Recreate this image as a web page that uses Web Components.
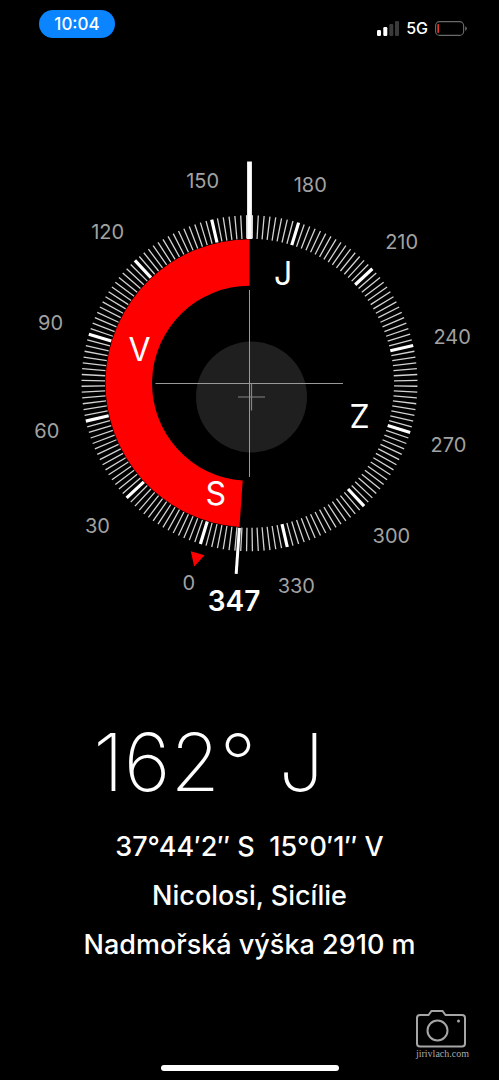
<!DOCTYPE html>
<html lang="cs">
<head>
<meta charset="utf-8">
<meta name="viewport" content="width=device-width, initial-scale=1">
<title>Kompas</title>
<style>
  html { background: #000; }
  body { margin: 0; background: #000; color: #fff; font-family: Inter, "Liberation Sans", sans-serif; }
</style>
</head>
<body>
<compass-app></compass-app>

<template id="status-bar">
  <style>
    :host { display: flex; justify-content: space-between; align-items: flex-start; padding: 10px 32px 0 39px; font-size: 17px; line-height: 28px; font-weight: 500; }
    .time { background: #0a84ff; border-radius: 14px; padding: 0 15px; min-width: 46px; text-align: center; }
    .right { display: flex; align-items: center; gap: 7px; padding-top: 4px; font-size: 16px; }
    svg { display: block; }
  </style>
  <div class="time"><slot name="time"></slot></div>
  <div class="right">
    <svg width="23" height="15" viewBox="0 0 23 15" aria-hidden="true">
      <g fill="#fff"><rect x="1" y="9" width="4" height="6" rx="1.2"/><rect x="7.3" y="6" width="4" height="9" rx="1.2"/></g>
      <g fill="#3a3a3a"><rect x="13.3" y="3" width="4" height="12" rx="1.2"/><rect x="19" y="0" width="4" height="15" rx="1.2"/></g>
    </svg>
    <slot name="network"></slot>
    <svg width="32" height="15" viewBox="0 0 32 15" aria-hidden="true">
      <rect x=".6" y=".6" width="28" height="13.8" rx="4" fill="none" stroke="#6a6a6a" stroke-width="1.1"/>
      <path d="M30.2 5.2v4.6c1-.4 1.6-1.3 1.6-2.3s-.6-1.9-1.6-2.3z" fill="#6a6a6a"/>
      <rect x="2.4" y="3" width="1.5" height="9" rx=".7" fill="#ff3b30"/>
    </svg>
  </div>
</template>

<template id="compass-dial">
  <style>
    :host { display: block; }
    svg { display: block; width: 100%; height: auto; font-family: inherit; }
    text { text-anchor: middle; fill: #fff; }
    .deg { font-size: 20px; fill: #a2a2a2; }
    .card { font-size: 32px; }
    .mark { font-size: 28px; font-weight: 600; }
  </style>
  <svg viewBox="0 150 499 470" role="img" aria-label="Kompas">
    <circle cx="251.5" cy="397" r="55.5" fill="#1f1f1f"/>
    <path class="arc" fill="#f00"/>
    <g class="minor" stroke="#d2d2d2" stroke-width="1.3"></g>
    <g class="major" stroke="#fff" stroke-width="3.2"></g>
    <path d="M249.5 290V477M155.5 383.5H343" stroke="#999" fill="none"/>
    <path d="M238 397H265M251.5 383.5V410.5" stroke="#858585" stroke-width="1.2" fill="none"/>
    <path d="M249.5 161.5V239" stroke="#fff" stroke-width="4.8"/>
    <path d="M246.8 215.5V238M252.2 215.5V238" stroke="#ddd" stroke-width="1"/>
    <path class="bearing" stroke="#fff" stroke-width="3"/>
    <path d="M190.8 551.2L204.5 555.3L194.2 566.5Z" fill="#f00"/>
    <g class="labels"></g>
  </svg>
</template>

<template id="compass-readout">
  <style>
    :host { display: flex; flex-direction: column; align-items: center; text-align: center; font-size: 27px; line-height: 49px; font-weight: 500; white-space: pre; }
    .heading { font-size: 80px; line-height: 100px; font-weight: 200; padding-right: 82px; margin-bottom: 10px; }
  </style>
  <div class="heading"><slot name="heading"></slot></div>
  <slot></slot>
</template>

<template id="photo-credit">
  <style>
    :host { display: block; }
    a { display: flex; flex-direction: column; align-items: flex-start; color: #aaa; text-decoration: none; font: 10px/12px "Liberation Serif", serif; }
    svg { display: block; }
  </style>
  <a href="#"><svg width="50" height="38" viewBox="0 0 50 38" fill="none" stroke="#a6a6a6" stroke-width="2" aria-hidden="true">
    <path d="M4 5H12.5L15.5 1H26.5L29.5 5H46Q49 5 49 8V33.5Q49 36.5 46 36.5H4Q1 36.5 1 33.5V8Q1 5 4 5Z"/>
    <circle cx="21.5" cy="20.5" r="10"/><circle cx="42.5" cy="11" r="1.5" fill="#a6a6a6" stroke="none"/>
  </svg><slot></slot></a>
</template>

<template id="compass-app">
  <style>
    :host { display: flex; flex-direction: column; min-height: 100vh; }
    compass-dial { margin-top: 108px; }
    compass-readout { margin-top: 92px; }
    footer { display: flex; flex-direction: column; gap: 5px; margin-top: auto; padding-bottom: 9px; }
    photo-credit { align-self: flex-end; margin-right: 30px; }
    .home { align-self: center; width: 178px; height: 6px; border-radius: 3px; background: #fff; }
  </style>
  <status-bar><span slot="time">10:04</span><span slot="network">5G</span></status-bar>
  <compass-dial heading="163" bearing="347"></compass-dial>
  <compass-readout>
    <span slot="heading">162° J</span>
    <div>37°44′2″ S  15°0′1″ V</div>
    <div>Nicolosi, Sicílie</div>
    <div>Nadmořská výška 2910 m</div>
  </compass-readout>
  <footer>
    <photo-credit>jirivlach.com</photo-credit>
    <div class="home"></div>
  </footer>
</template>

<script>
class TemplateElement extends HTMLElement {
  constructor() {
    super();
    this.attachShadow({ mode: 'open' })
      .append(document.getElementById(this.localName).content.cloneNode(true));
  }
}

class CompassDial extends TemplateElement {
  connectedCallback() {
    const heading = parseFloat(this.getAttribute('heading'));
    const bearing = parseFloat(this.getAttribute('bearing'));
    const find = s => this.shadowRoot.querySelector(s);
    const at = (deg, r) => {
      const a = (deg - heading) * Math.PI / 180;
      return [(249.5 + r * Math.sin(a)).toFixed(2), (383.3 - r * Math.cos(a)).toFixed(2)];
    };
    const line = (deg, r1, r2) => `M${at(deg, r1)}L${at(deg, r2)}`;
    let minor = '', major = '', labels = '';
    for (let d = 0; d < 360; d += 2) {
      if (d % 30) minor += line(d, 144.5, 168);
      else {
        major += line(d, 144.5, 168);
        const [x, y] = at(d, 208);
        labels += `<text class="deg" x="${x}" y="${+y + 7.5}">${d}</text>`;
      }
    }
    ['S', 'V', 'J', 'Z'].forEach((name, i) => {
      const [x, y] = at(i * 90, 115);
      labels += `<text class="card" x="${x}" y="${+y + 11.5}">${name}</text>`;
    });
    labels += `<text class="mark" x="234" y="611">${bearing}</text>`;
    find('.minor').innerHTML = `<path d="${minor}"/>`;
    find('.major').innerHTML = `<path d="${major}"/>`;
    find('.labels').innerHTML = labels;
    find('.bearing').setAttribute('d', line(bearing, 145, 191));
    find('.arc').setAttribute('d',
      `M${at(heading, 144)}A144 144 0 0 0 ${at(bearing, 144)}L${at(bearing, 97.5)}A97.5 97.5 0 0 1 ${at(heading, 97.5)}Z`);
  }
}

customElements.define('status-bar', class extends TemplateElement {});
customElements.define('compass-dial', CompassDial);
customElements.define('compass-readout', class extends TemplateElement {});
customElements.define('photo-credit', class extends TemplateElement {});
customElements.define('compass-app', class extends TemplateElement {});
</script>
</body>
</html>
